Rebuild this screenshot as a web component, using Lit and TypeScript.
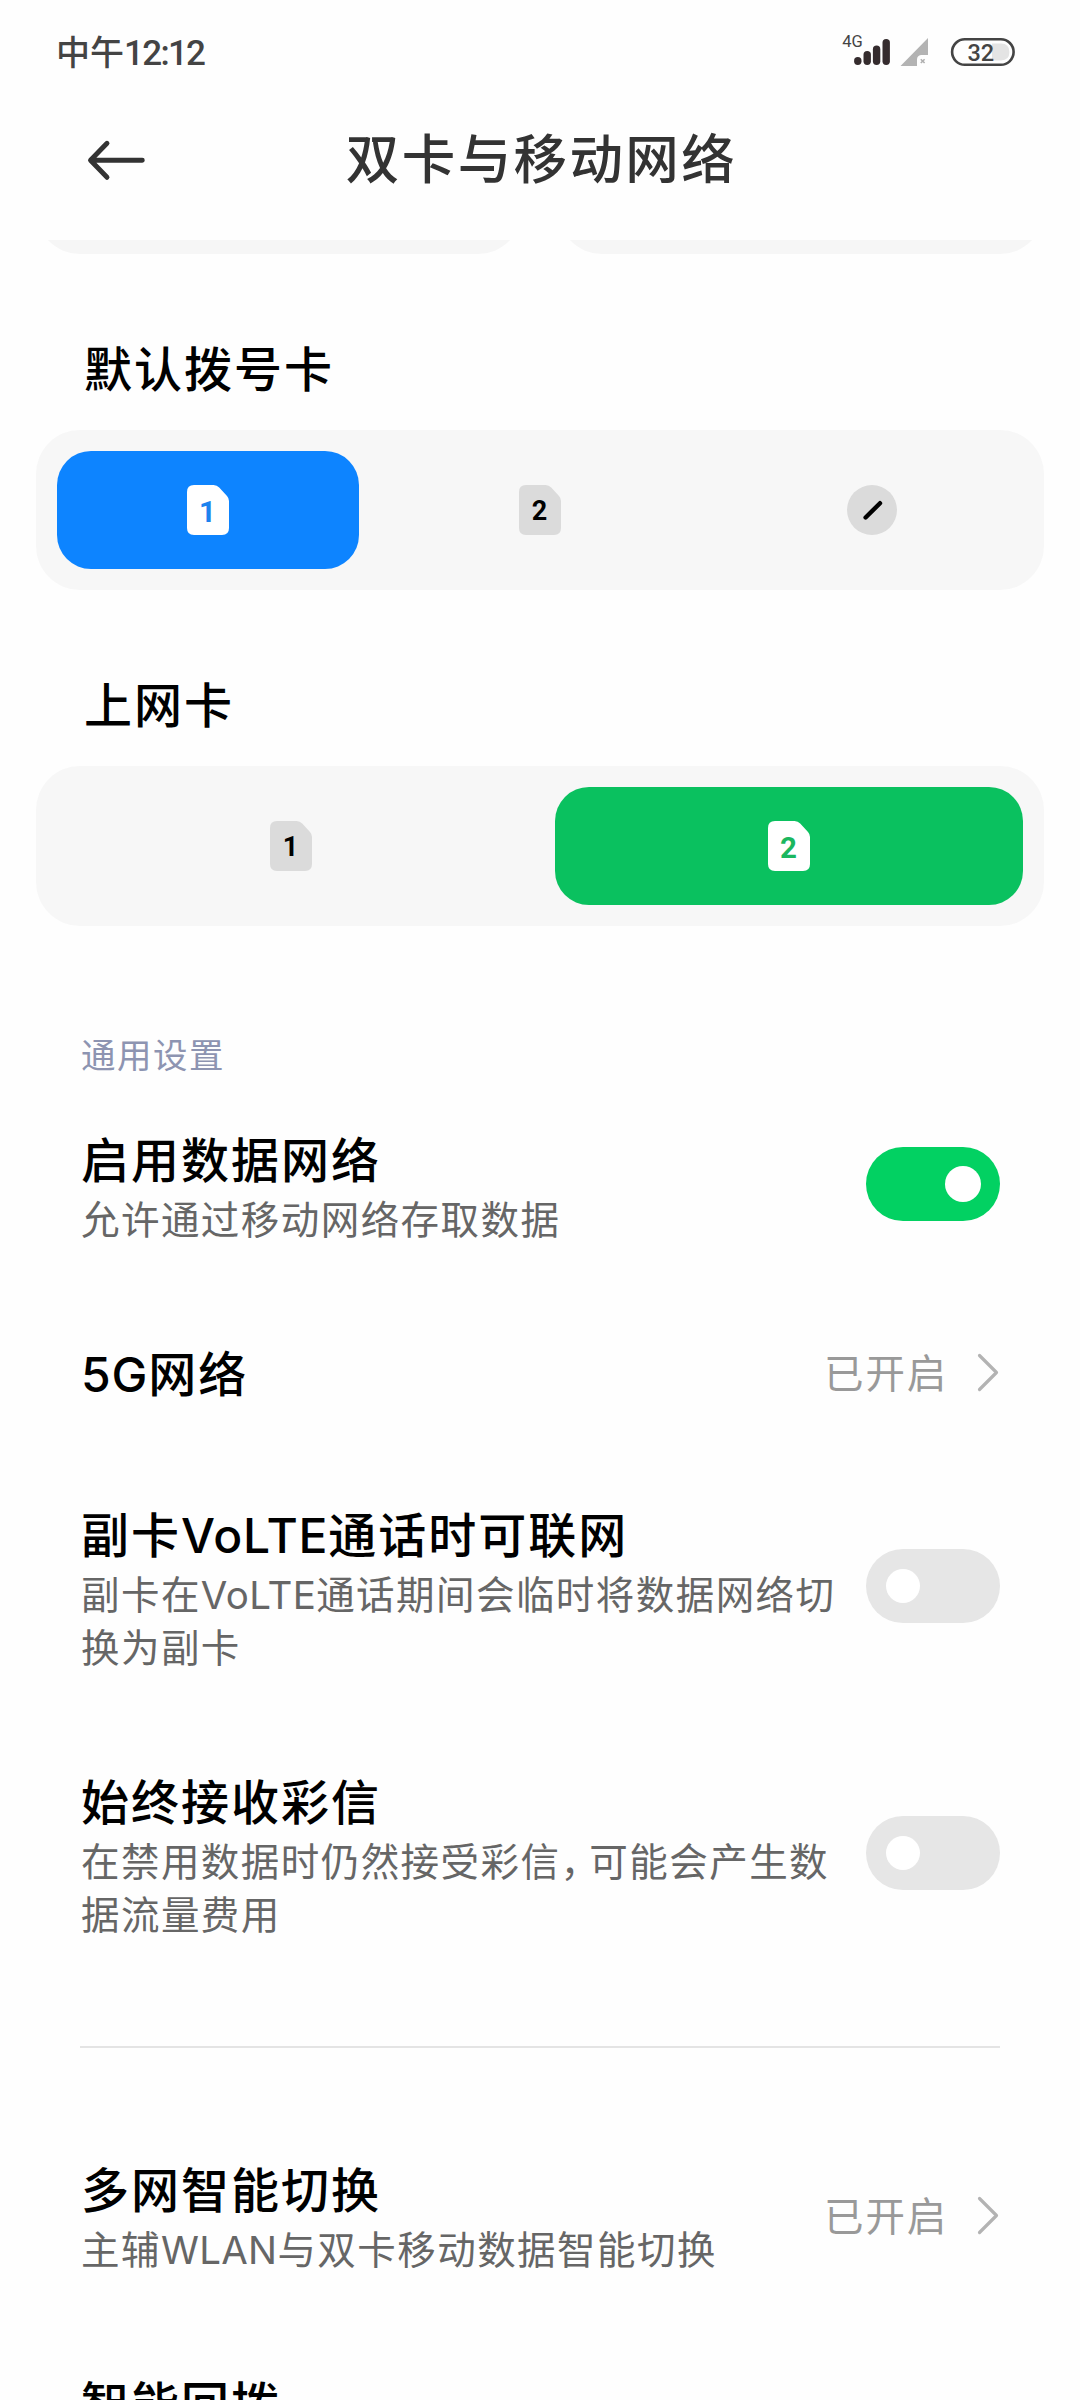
import { LitElement, html, css, svg, nothing } from "lit";
import { customElement, property } from "lit/decorators.js";
import { classMap } from "lit/directives/class-map.js";

/** Wraps Latin runs and full-width commas so they can be spaced apart from the Han text. */
const mixed = (text: string) =>
  text.split(/([A-Za-z0-9]+|，)/).map((part) =>
    /^[A-Za-z0-9]+$/.test(part)
      ? html`<span class="latin">${part}</span>`
      : part === "，"
        ? html`<span class="comma">${part}</span>`
        : part
  );

@customElement("status-bar")
class StatusBar extends LitElement {
  static styles = css`
    :host {
      display: flex;
      justify-content: space-between;
      height: 104px;
      padding: 0 65px 0 56px;
      box-sizing: border-box;
      color: #444;
    }
    .time {
      font-size: 34px;
      font-weight: 500;
      line-height: 102px;
    }
    .digits {
      font-family: Roboto, sans-serif;
      font-size: 35px;
      line-height: 0;
      letter-spacing: -1.7px;
    }
    .icons {
      display: block;
      width: 176px;
      height: 104px;
    }
    .net {
      font-family: Roboto, sans-serif;
      font-size: 16.5px;
      font-weight: 400;
      fill: #444;
    }
    .level {
      font-family: Roboto, sans-serif;
      font-size: 23.5px;
      font-weight: 500;
      fill: #444;
    }
  `;

  render() {
    const bars = [
      [857.8, 57],
      [867.2, 51],
      [876.6, 45.5],
      [886.2, 39],
    ];
    return html`
      <div class="time">中午<span class="digits">12:12</span></div>
      <svg class="icons" viewBox="839 0 176 104">
        <text class="net" x="842.3" y="47">4G</text>
        ${bars.map(
          ([x, top]) =>
            svg`<rect x=${x - 3.7} y=${top} width="7.4" height=${65 - top} rx="3.7" fill="#352c2e"/>`
        )}
        <path d="M928 38V55H921Q917 55.5 917 59.500V66H900.500Z" fill="#b3b3b3" />
        <path
          d="M920.800 59.200L924.600 63M924.600 59.200L920.800 63"
          stroke="#b0b0b0"
          stroke-width="1.600"
        />
        <path d="M992 43.500H1001Q1009.400 43.500 1009.400 52Q1009.400 60.400 1001 60.400H992Z" fill="#e4e4e4" />
        <rect x="952.100" y="39.300" width="61.500" height="25.500" rx="12.750" fill="none" stroke="#444" stroke-width="2.600" />
        <text class="level" x="967.400" y="61">32</text>
      </svg>
    `;
  }
}

@customElement("sim-icon")
class SimIcon extends LitElement {
  @property() label = "";
  @property() tone = "idle";

  static styles = css`
    :host {
      display: block;
      height: 50px;
    }
    .icon {
      display: block;
    }
    .digit {
      font-family: Roboto, sans-serif;
      font-weight: 700;
      text-anchor: middle;
      font-size: 27px;
      fill: #000;
    }
    .digit.blue {
      font-size: 29.5px;
      fill: #1c82ee;
    }
    .digit.green {
      font-size: 29.5px;
      fill: #1bb75f;
    }
  `;

  render() {
    if (this.label === "") {
      return html`<svg class="icon" width="50" height="50" viewBox="0 0 50 50">
        <circle cx="25" cy="25" r="25" fill="#dbdbdb" />
        <path d="M18.600 32.500L33 18.200" stroke="#000" stroke-width="4.400" stroke-linecap="round" />
      </svg>`;
    }
    const active = this.tone !== "idle";
    return html`<svg class="icon" width="42" height="50" viewBox="0 0 42 50">
      <path
        d="M7 0H26.500Q30 0 32.200 2.600L40 11Q42 13.200 42 16V43Q42 50 35 50H7Q0 50 0 43V7Q0 0 7 0Z"
        fill=${active ? "#fff" : "#dbdbdb"}
      />
      <text class="digit ${this.tone}" x="20.5" y=${active ? 36.5 : 34.5}>${this.label}</text>
    </svg>`;
  }
}

@customElement("card-picker")
class CardPicker extends LitElement {
  @property() heading = "";
  @property({ attribute: false }) options: string[] = [];
  @property({ type: Number }) selected = 0;
  @property() tone = "blue";

  static styles = css`
    :host {
      display: block;
      padding: 81px 36px 0;
    }
    .heading {
      padding-left: 48px;
      margin-bottom: 27px;
      font-size: 48px;
      font-weight: 500;
      letter-spacing: 2px;
      line-height: 63px;
      height: 68px;
      color: #000;
    }
    .group {
      display: flex;
      gap: 30px;
      height: 160px;
      box-sizing: border-box;
      padding: 21px;
      border-radius: 44px;
      background: #f7f7f7;
    }
    .option {
      flex: 1;
      display: flex;
      align-items: center;
      justify-content: center;
      border-radius: 34px;
    }
    .option.blue {
      background: #0d84ff;
    }
    .option.green {
      background: #0ac15f;
    }
  `;

  render() {
    return html`
      <div class="heading">${this.heading}</div>
      <div class="group">
        ${this.options.map((label, i) => {
          const on = i === this.selected;
          return html`<div class=${classMap({ option: true, [this.tone]: on })}>
            <sim-icon .label=${label} .tone=${on ? this.tone : "idle"}></sim-icon>
          </div>`;
        })}
      </div>
    `;
  }
}

@customElement("toggle-switch")
class ToggleSwitch extends LitElement {
  @property({ type: Boolean, reflect: true }) on = false;

  static styles = css`
    :host {
      display: flex;
      align-items: center;
      width: 134px;
      height: 74px;
      box-sizing: border-box;
      padding: 0 20px;
      border-radius: 37px;
      background: #e6e6e6;
    }
    :host([on]) {
      justify-content: flex-end;
      padding: 0 19px;
      background: #02d162;
    }
    .knob {
      width: 34px;
      height: 34px;
      border-radius: 50%;
      background: #fff;
    }
    :host([on]) .knob {
      width: 36px;
      height: 36px;
    }
  `;

  render() {
    return html`<div class="knob"></div>`;
  }
}

@customElement("setting-row")
class SettingRow extends LitElement {
  @property() name = "";
  @property() note = "";
  @property() value = "";
  @property() toggle = "";

  static styles = css`
    :host {
      display: flex;
      align-items: center;
      justify-content: space-between;
      padding: 43.5px 80px 49.5px 81px;
    }
    .text {
      width: 760px;
    }
    .text.narrow {
      width: 700px;
    }
    .name {
      font-size: 48px;
      font-weight: 500;
      letter-spacing: 2px;
      line-height: 68px;
      height: 68px;
      color: #000;
      white-space: nowrap;
    }
    .note {
      font-size: 38.5px;
      letter-spacing: 1.45px;
      line-height: 53px;
      color: #666;
    }
    .latin {
      line-height: 0;
      letter-spacing: 0.3px;
      font-family: Inter, "Noto Sans CJK SC", sans-serif;
    }
    .name .latin {
      letter-spacing: 0.8px;
    }
    .comma {
      margin-right: -11px;
    }
    .control {
      margin-top: 2px;
    }
    .link {
      display: flex;
      align-items: center;
      gap: 29px;
      font-size: 39.5px;
      letter-spacing: 1.8px;
      line-height: 53px;
      color: #999;
      white-space: nowrap;
    }
    .chevron {
      display: block;
      margin-top: 5px;
    }
  `;

  render() {
    return html`
      <div class=${classMap({ text: true, narrow: this.value !== "" })}>
        <div class="name">${mixed(this.name)}</div>
        ${this.note ? html`<div class="note">${mixed(this.note)}</div>` : nothing}
      </div>
      ${this.toggle
        ? html`<toggle-switch class="control" ?on=${this.toggle === "on"}></toggle-switch>`
        : nothing}
      ${this.value
        ? html`<div class="link">
            <span>${this.value}</span>
            <svg class="chevron" width="23" height="40" viewBox="0 0 23 40">
              <path
                d="M2.500 2.500L19.500 19.500L2.500 36.500"
                fill="none"
                stroke="#b3b3b3"
                stroke-width="3.200"
                stroke-linecap="round"
                stroke-linejoin="round"
              />
            </svg>
          </div>`
        : nothing}
    `;
  }
}

@customElement("app-root")
class AppRoot extends LitElement {
  static styles = css`
    :host {
      display: block;
      width: 1080px;
      height: 2400px;
      overflow: hidden;
      background: #fefefe;
      font-family: "Noto Sans CJK SC", sans-serif;
    }
    .header {
      display: grid;
      grid-template-columns: 160px 1fr 157px;
      align-items: center;
      height: 107px;
      margin-bottom: 29px;
    }
    .back {
      display: block;
      margin: 5px 0 0 86px;
    }
    .title {
      margin: 0;
      text-align: center;
      font-size: 53.5px;
      font-weight: 500;
      letter-spacing: 2.4px;
      line-height: 104px;
      height: 107px;
      color: #333;
    }
    .strip {
      display: flex;
      align-items: flex-end;
      gap: 36px;
      height: 14px;
      padding: 0 36px;
      overflow: hidden;
    }
    .card {
      flex: 1;
      height: 100px;
      border-radius: 44px;
      background: #f6f6f6;
    }
    .section {
      margin-top: 103px;
      padding-left: 81px;
      height: 50px;
      font-size: 34.5px;
      letter-spacing: 1.5px;
      line-height: 48px;
      color: #8d94b1;
    }
    .divider {
      height: 2px;
      margin: 58px 80px 61px;
      background: #e4e4e4;
    }
  `;

  render() {
    return html`
      <status-bar></status-bar>
      <div class="header">
        <svg class="back" width="62" height="44" viewBox="86 138 62 44">
          <path
            d="M142.300 160.300H91M107 143.300L90.500 160.300L107 177.300"
            fill="none"
            stroke="#333"
            stroke-width="4.900"
            stroke-linecap="round"
            stroke-linejoin="round"
          />
        </svg>
        <h1 class="title">双卡与移动网络</h1>
      </div>
      <div class="strip">
        <div class="card"></div>
        <div class="card"></div>
      </div>
      <card-picker heading="默认拨号卡" .options=${["1", "2", ""]} selected="0" tone="blue"></card-picker>
      <card-picker heading="上网卡" .options=${["1", "2"]} selected="1" tone="green"></card-picker>
      <div class="section">通用设置</div>
      <setting-row name="启用数据网络" note="允许通过移动网络存取数据" toggle="on"></setting-row>
      <setting-row name="5G网络" value="已开启"></setting-row>
      <setting-row
        name="副卡VoLTE通话时可联网"
        note="副卡在VoLTE通话期间会临时将数据网络切换为副卡"
        toggle="off"
      ></setting-row>
      <setting-row
        name="始终接收彩信"
        note="在禁用数据时仍然接受彩信，可能会产生数据流量费用"
        toggle="off"
      ></setting-row>
      <div class="divider"></div>
      <setting-row name="多网智能切换" note="主辅WLAN与双卡移动数据智能切换" value="已开启"></setting-row>
      <setting-row name="智能回拨"></setting-row>
    `;
  }
}
